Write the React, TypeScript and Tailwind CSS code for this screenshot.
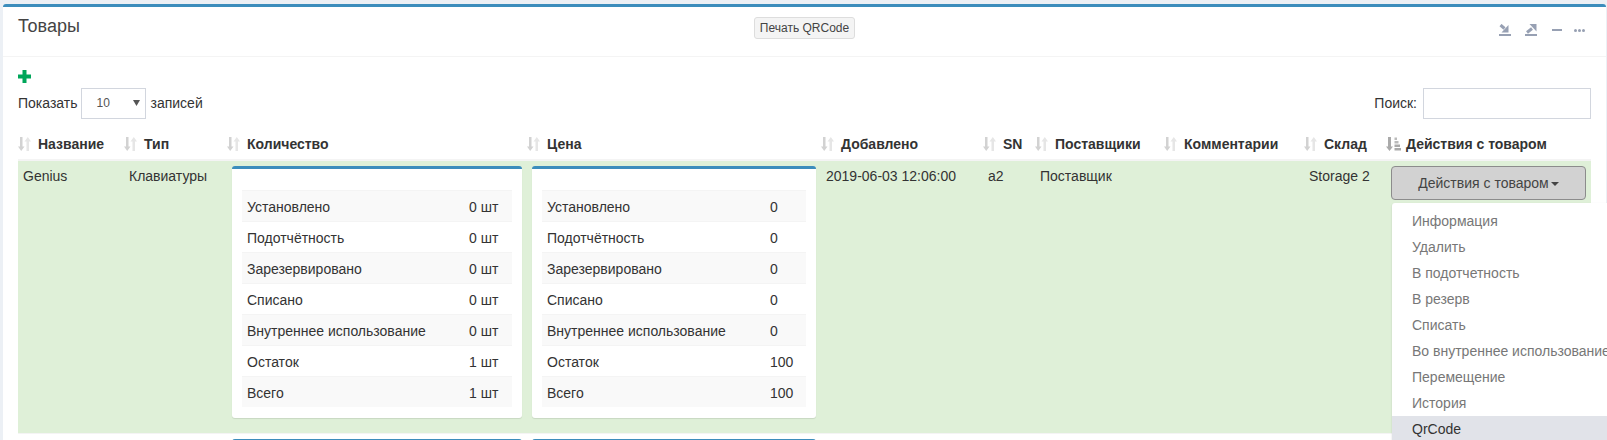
import React from 'react';

const stockRows = [
  ['Установлено', '0 шт'],
  ['Подотчётность', '0 шт'],
  ['Зарезервировано', '0 шт'],
  ['Списано', '0 шт'],
  ['Внутреннее использование', '0 шт'],
  ['Остаток', '1 шт'],
  ['Всего', '1 шт'],
];

const priceRows = [
  ['Установлено', '0'],
  ['Подотчётность', '0'],
  ['Зарезервировано', '0'],
  ['Списано', '0'],
  ['Внутреннее использование', '0'],
  ['Остаток', '100'],
  ['Всего', '100'],
];

const columns = [
  { title: 'Название', width: 'w-[106px]' },
  { title: 'Тип', width: 'w-[103px]' },
  { title: 'Количество', width: 'w-[300px]' },
  { title: 'Цена', width: 'w-[294px]' },
  { title: 'Добавлено', width: 'w-[162px]' },
  { title: 'SN', width: 'w-[52px]' },
  { title: 'Поставщики', width: 'w-[129px]' },
  { title: 'Комментарии', width: 'w-[140px]' },
  { title: 'Склад', width: 'w-[82px]' },
  { title: 'Действия с товаром', width: 'w-[205px]', active: true },
];

const menuItems = [
  'Информация',
  'Удалить',
  'В подотчетность',
  'В резерв',
  'Списать',
  'Во внутреннее использование',
  'Перемещение',
  'История',
];

const SortIcon = ({ active }: { active?: boolean }) =>
  active ? (
    <svg width="15" height="14" viewBox="0 0 15 14" className="mr-[5px] shrink-0">
      <path d="M2 0h3v9.500h2L3.500 14 0 9.500h2z" fill="#aaa" />
      <rect x="8.500" y="0.500" width="2.500" height="2.500" fill="#bbb" />
      <rect x="8.500" y="4" width="4" height="2.500" fill="#bbb" />
      <rect x="8.500" y="7.500" width="5.500" height="2.500" fill="#aaa" />
      <rect x="8.500" y="11" width="6.500" height="2.500" fill="#aaa" />
    </svg>
  ) : (
    <svg width="13" height="14" viewBox="0 0 13 14" className="mr-[7px] shrink-0">
      <path d="M2 0h2.500v9.500h2L3.200 14 0 9.500h2z" fill="#d2d2d2" />
      <path d="M8.500 14H11V4.500h2L9.800 0 6.500 4.500h2z" fill="#e6e6e6" />
    </svg>
  );

const InfoCard = ({ rows, valueWidth }: { rows: string[][]; valueWidth: string }) => (
  <div className="mb-[10px] rounded-[3px] border-t-[3px] border-[#3c8dbc] bg-white px-[10px] pb-[11px] pt-[21px] shadow-[0_1px_1px_rgba(0,0,0,0.1)]">
    <table className="w-full table-fixed border-collapse">
      <tbody>
        {rows.map((row, i) => (
          <tr key={row[0]} className={i % 2 === 0 ? 'bg-[#f9f9f9]' : ''}>
            <td className="border-t border-[#f4f4f4] px-[5px] pb-1 pt-[6px]">{row[0]}</td>
            <td className={`border-t border-[#f4f4f4] px-[5px] pb-1 pt-[6px] ${valueWidth}`}>{row[1]}</td>
          </tr>
        ))}
      </tbody>
    </table>
  </div>
);

export default function App() {
  return (
    <div
      className="h-[440px] w-[1607px] overflow-hidden bg-[#ecf0f5] pl-[3px] pr-px pt-1 text-sm leading-5 text-[#333]"
      style={{ fontFamily: '"Liberation Sans", Arial, sans-serif' }}
    >
      <div className="min-h-[436px] rounded-t-[3px] border-t-[3px] border-[#3c8dbc] bg-white">
        {/* Шапка */}
        <div className="grid h-[50px] grid-cols-[1fr_auto_1fr] border-b border-[#f4f4f4] px-[15px] pt-[10px]">
          <h3 className="text-lg leading-[18px] text-[#444]">Товары</h3>
          <button className="h-[22px] rounded-[3px] border border-[#ddd] bg-[#f4f4f4] px-[5px] text-xs leading-[18px] text-[#444]">
            Печать QRCode
          </button>
          <div className="flex items-center justify-end pb-[13px] pr-[6px] text-[#97a0b3]">
            <svg width="12" height="12" viewBox="0 0 12 12" className="mr-[14px]">
              <path d="M1.500 1l4 3.500" stroke="currentColor" strokeWidth="3" />
              <path d="M9.500 1v7.500H2.500z" fill="currentColor" />
              <rect y="10" width="12" height="2" fill="currentColor" />
            </svg>
            <svg width="12" height="12" viewBox="0 0 12 12" className="mr-[15px]">
              <path d="M2 8.500l5-4" stroke="currentColor" strokeWidth="3" />
              <path d="M11.500 0v7.500L4.500 0z" fill="currentColor" />
              <rect y="10" width="12" height="2" fill="currentColor" />
            </svg>
            <div className="mr-[12px] h-[2px] w-[10px] bg-[#97a0b3]" />
            <div className="flex gap-px">
              <div className="size-[3px] rounded-full bg-[#97a0b3]" />
              <div className="size-[3px] rounded-full bg-[#97a0b3]" />
              <div className="size-[3px] rounded-full bg-[#97a0b3]" />
            </div>
          </div>
        </div>

        <div className="px-[15px] pt-[13px]">
          <svg width="13" height="13" viewBox="0 0 13 13" className="mb-[5px] block">
            <path d="M4.500 0h4v4.500H13v4H8.500V13h-4V8.500H0v-4h4.500z" fill="#00a65a" />
          </svg>

          <div className="flex h-[30px] items-center justify-between">
            <div className="flex items-center">
              <span>Показать</span>
              <div className="ml-[3px] mr-[5px] flex h-[31px] w-[65px] items-center justify-between border border-[#d2d6de] pl-[15px] pr-[5px] text-xs text-[#555]">
                <span>10</span>
                <svg width="7" height="6" viewBox="0 0 7 6">
                  <path d="M0 0h7L3.500 6z" fill="#555" />
                </svg>
              </div>
              <span>записей</span>
            </div>
            <div className="flex items-center">
              <span>Поиск:</span>
              <input className="ml-[6px] h-[31px] w-[168px] border border-[#d2d6de] bg-white" />
            </div>
          </div>

          <table className="mt-[11px] w-[1573px] table-fixed border-collapse">
            <thead>
              <tr>
                {columns.map((col) => (
                  <th key={col.title} className={`${col.width} border-b-2 border-[#f4f4f4] py-[5px] text-left font-bold`}>
                    <div className="flex items-center whitespace-nowrap">
                      <SortIcon active={col.active} />
                      {col.title}
                    </div>
                  </th>
                ))}
              </tr>
            </thead>
            <tbody>
              <tr className="bg-[#dff0d8] align-top">
                <td className="p-[5px]">Genius</td>
                <td className="p-[5px]">Клавиатуры</td>
                <td className="p-[5px]">
                  <InfoCard rows={stockRows} valueWidth="w-[48px]" />
                </td>
                <td className="p-[5px]">
                  <InfoCard rows={priceRows} valueWidth="w-[41px]" />
                </td>
                <td className="p-[5px]">2019-06-03 12:06:00</td>
                <td className="p-[5px]">a2</td>
                <td className="p-[5px]">Поставщик</td>
                <td className="p-[5px]"></td>
                <td className="p-[5px]">Storage 2</td>
                <td className="relative p-[5px]">
                  <button className="h-[34px] w-[195px] rounded-[4px] border border-[#8c8c8c] bg-[#d2d2d2] text-[#444]">
                    Действия с товаром
                    <span className="ml-0.5 inline-block border-x-4 border-t-4 border-x-transparent border-t-[#444] align-middle" />
                  </button>
                  <ul className="absolute left-[6px] top-[42px] z-10 w-[245px] rounded-[3px] bg-white py-[5px] shadow-[0_1px_2px_rgba(0,0,0,0.15)]">
                    {menuItems.map((item) => (
                      <li key={item} className="whitespace-nowrap px-5 py-[3px] text-[#777]">
                        {item}
                      </li>
                    ))}
                    <li className="bg-[#e1e3e9] px-5 py-[3px] text-[#333]">QrCode</li>
                  </ul>
                </td>
              </tr>
              <tr className="border-t border-[#f4f4f4] align-top">
                <td className="p-[5px]"></td>
                <td className="p-[5px]"></td>
                <td className="p-[5px]">
                  <InfoCard rows={stockRows} valueWidth="w-[48px]" />
                </td>
                <td className="p-[5px]">
                  <InfoCard rows={priceRows} valueWidth="w-[41px]" />
                </td>
                <td colSpan={6}></td>
              </tr>
            </tbody>
          </table>
        </div>
      </div>
    </div>
  );
}
